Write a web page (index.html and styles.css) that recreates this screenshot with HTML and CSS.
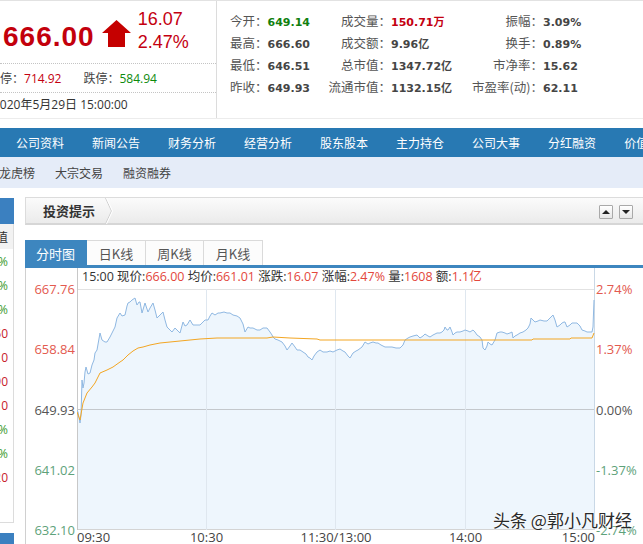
FILE: index.html
```html
<!DOCTYPE html>
<html lang="zh-CN">
<head>
<meta charset="utf-8">
<title>行情</title>
<link rel="stylesheet" href="styles.css">
</head>
<body>
<div class="page">
  <header class="head">
    <div class="quote">
      <div class="price-row">
        <span class="price">666.00</span>
        <svg class="arrow" width="29" height="27" viewBox="0 0 29 27"><polygon points="14.5,0 29,13 23,13 23,27 6,27 6,13 0,13" fill="#c50000"/></svg>
        <div class="change"><div>16.07</div><div>2.47%</div></div>
      </div>
      <div class="limits">
        <span class="lim first">涨停：<span class="up">714.92</span></span>
        <span class="lim">跌停：<span class="down">584.94</span></span>
      </div>
      <div class="date">2020年5月29日 15:00:00</div>
    </div>
    <div class="stats">
      <div class="c1"><span class="lb">今开：</span><span class="v green">649.14</span></div>
      <span class="lb r">成交量：</span><span class="v red">150.71万</span>
      <span class="lb r">振幅：</span><span class="v">3.09%</span>

      <div class="c1"><span class="lb">最高：</span><span class="v">666.60</span></div>
      <span class="lb r">成交额：</span><span class="v">9.96亿</span>
      <span class="lb r">换手：</span><span class="v">0.89%</span>

      <div class="c1"><span class="lb">最低：</span><span class="v">646.51</span></div>
      <span class="lb r">总市值：</span><span class="v">1347.72亿</span>
      <span class="lb r">市净率：</span><span class="v">15.62</span>

      <div class="c1"><span class="lb">昨收：</span><span class="v">649.93</span></div>
      <span class="lb r">流通市值：</span><span class="v">1132.15亿</span>
      <span class="lb r">市盈率(动)：</span><span class="v">62.11</span>
    </div>
  </header>

  <nav class="nav">
    <a>公司资料</a><a>新闻公告</a><a>财务分析</a><a>经营分析</a><a>股东股本</a><a>主力持仓</a><a>公司大事</a><a>分红融资</a><a>价值分析</a>
  </nav>
  <nav class="subnav">
    <a class="first">龙虎榜</a><a>大宗交易</a><a>融资融券</a>
  </nav>

  <div class="main">
    <aside class="side">
      <div class="side-head"></div>
      <div class="side-list">
        <div class="row hd">市值</div>
        <div class="row g">2.47%</div>
        <div class="row g">1.37%</div>
        <div class="row g">0.89%</div>
        <div class="row r">15.60</div>
        <div class="row r">62.10</div>
        <div class="row r">9.90</div>
        <div class="row r">1.10</div>
        <div class="row g">3.09%</div>
        <div class="row g">0.00%</div>
        <div class="row r">8.20</div>
      </div>
      <div class="side-head second"></div>
    </aside>

    <section class="content">
      <div class="tipbar">
        <span class="tip-title">投资提示</span>
        <svg class="chev" width="8" height="26" viewBox="0 0 8 26"><polyline points="0.5,0 6.5,13 0.5,26" fill="none" stroke="#cfcfcf" stroke-width="1"/><polyline points="1.5,0 7.5,13 1.5,26" fill="none" stroke="#ffffff" stroke-width="1"/></svg>
        <div class="tip-btns">
          <span class="tbtn"><span class="tri-up"></span></span>
          <span class="tbtn"><span class="tri-down"></span></span>
        </div>
      </div>

      <div class="tabs">
        <span class="tab active w62">分时图</span>
        <span class="tab w59">日K线</span>
        <span class="tab w58">周K线</span>
        <span class="tab w59">月K线</span>
      </div>

      <div class="chart">
        <div class="info">15:00 现价:<em>666.00</em> 均价:<em>661.01</em> 涨跌:<em>16.07</em> 涨幅:<em>2.47%</em> 量:<em>1608</em> 额:<em>1.1亿</em></div>

        <div class="yl">
          <div class="t red"><span>667.76</span></div>
          <div class="t red"><span>658.84</span></div>
          <div class="t gray"><span>649.93</span></div>
          <div class="t green"><span>641.02</span></div>
          <div class="t green"><span>632.10</span></div>
        </div>

        <svg class="plot" width="518" height="241" viewBox="0 0 518 241">
          <polygon fill="#eef6fd" points="0,121 1,123 3,134 4,126 5,91 6,99 7,94 8,83 9,78 11,85 13,84 15,76 17,71 18,64 20,61 23,44 25,51 28,53 30,53 33,48 35,44 38,38 40,29 43,24 45,27 48,26 50,17 51,14 53,13 55,11 58,9 60,16 62,13 63,13 65,24 68,14 71,23 73,19 76,14 78,21 80,29 83,26 86,23 88,31 90,38 93,41 95,43 98,39 101,42 103,44 106,33 108,37 110,36 113,31 116,36 120,36 123,36 126,33 128,31 131,31 133,27 135,24 138,26 141,24 143,24 147,23 150,24 153,24 156,26 160,27 163,29 166,35 168,43 171,38 173,39 176,39 180,41 183,41 186,39 190,39 193,43 195,46 196,48 198,50 201,51 205,53 208,57 210,61 213,57 215,54 218,58 220,61 223,61 226,63 229,65 231,68 233,69 235,71 237,67 240,63 243,61 246,63 250,63 253,62 256,63 260,61 263,60 266,62 268,63 271,67 273,69 276,64 279,62 281,61 285,58 288,53 291,55 293,54 296,53 299,54 301,54 304,56 308,58 311,58 315,58 319,59 323,59 326,56 328,51 331,49 333,48 336,47 340,46 343,49 346,47 348,45 351,47 353,48 356,46 360,44 363,44 365,43 367,41 368,38 370,41 371,41 373,38 375,43 376,46 378,44 380,43 383,43 386,42 388,41 391,42 393,43 396,41 398,43 400,46 403,48 405,51 406,59 408,61 410,57 411,53 413,55 415,56 418,51 420,44 423,43 425,43 428,44 430,45 433,44 435,43 436,49 438,47 440,46 443,44 446,43 449,41 451,39 453,35 454,29 456,31 458,33 461,32 463,31 467,32 470,32 473,29 476,26 478,31 480,38 483,36 485,34 487,33 488,33 490,38 493,36 495,34 498,34 500,34 503,37 505,41 508,42 510,43 513,43 515,43 516,38 517,11 517,241 0,241"/>
          <line x1="0" y1="0.5" x2="518" y2="0.5" stroke="#e2e2e2"/>
          <line x1="0" y1="240.5" x2="518" y2="240.5" stroke="#d4d4d4"/>
          <line x1="0" y1="120.5" x2="518" y2="120.5" stroke="#c4c8cc"/>
          <line x1="129.5" y1="0" x2="129.5" y2="241" stroke="#dfe7ef"/>
          <line x1="258.5" y1="0" x2="258.5" y2="241" stroke="#dfe7ef"/>
          <line x1="388.5" y1="0" x2="388.5" y2="241" stroke="#dfe7ef"/>
          <line x1="0.5" y1="0" x2="0.5" y2="241" stroke="#c8c8c8"/>
          <line x1="517.5" y1="0" x2="517.5" y2="241" stroke="#c9d8e6"/>
          <polyline fill="none" stroke="#8fb8e2" stroke-width="1" stroke-linejoin="round" points="0,121 1,123 3,134 4,126 5,91 6,99 7,94 8,83 9,78 11,85 13,84 15,76 17,71 18,64 20,61 23,44 25,51 28,53 30,53 33,48 35,44 38,38 40,29 43,24 45,27 48,26 50,17 51,14 53,13 55,11 58,9 60,16 62,13 63,13 65,24 68,14 71,23 73,19 76,14 78,21 80,29 83,26 86,23 88,31 90,38 93,41 95,43 98,39 101,42 103,44 106,33 108,37 110,36 113,31 116,36 120,36 123,36 126,33 128,31 131,31 133,27 135,24 138,26 141,24 143,24 147,23 150,24 153,24 156,26 160,27 163,29 166,35 168,43 171,38 173,39 176,39 180,41 183,41 186,39 190,39 193,43 195,46 196,48 198,50 201,51 205,53 208,57 210,61 213,57 215,54 218,58 220,61 223,61 226,63 229,65 231,68 233,69 235,71 237,67 240,63 243,61 246,63 250,63 253,62 256,63 260,61 263,60 266,62 268,63 271,67 273,69 276,64 279,62 281,61 285,58 288,53 291,55 293,54 296,53 299,54 301,54 304,56 308,58 311,58 315,58 319,59 323,59 326,56 328,51 331,49 333,48 336,47 340,46 343,49 346,47 348,45 351,47 353,48 356,46 360,44 363,44 365,43 367,41 368,38 370,41 371,41 373,38 375,43 376,46 378,44 380,43 383,43 386,42 388,41 391,42 393,43 396,41 398,43 400,46 403,48 405,51 406,59 408,61 410,57 411,53 413,55 415,56 418,51 420,44 423,43 425,43 428,44 430,45 433,44 435,43 436,49 438,47 440,46 443,44 446,43 449,41 451,39 453,35 454,29 456,31 458,33 461,32 463,31 467,32 470,32 473,29 476,26 478,31 480,38 483,36 485,34 487,33 488,33 490,38 493,36 495,34 498,34 500,34 503,37 505,41 508,42 510,43 513,43 515,43 516,38 517,11"/>
          <polyline fill="none" stroke="#f3a623" stroke-width="1" stroke-linejoin="round" points="0,123 3,131 6,114 10,104 15,98 18,94 23,84 30,81 36,78 43,73 46,71 51,66 56,62 61,59 66,58 73,56 83,54 93,53 103,52 113,51 123,50 140,49 190,49 196,48 213,49 240,50 243,51 455,51 456,50 493,50 494,49 515,49 517,44"/>
        </svg>

        <div class="yr">
          <div class="t red"><span>2.74%</span></div>
          <div class="t red"><span>1.37%</span></div>
          <div class="t gray"><span>0.00%</span></div>
          <div class="t green"><span>-1.37%</span></div>
          <div class="t green"><span>-2.74%</span></div>
        </div>

        <div class="xa">
          <div class="t"><span>09:30</span></div>
          <div class="t"><span>10:30</span></div>
          <div class="t"><span>11:30/13:00</span></div>
          <div class="t"><span>14:00</span></div>
          <div class="t"><span>15:00</span></div>
        </div>
      </div>
    </section>
  </div>

  <div class="wm">头条 @郭小凡财经</div>
</div>
</body>
</html>
```

FILE: styles.css
```css
* { box-sizing: border-box; }
html, body { margin: 0; padding: 0; }
body {
  width: 643px;
  height: 544px;
  overflow: hidden;
  background: #fff;
  font-family: "Noto Sans CJK SC", sans-serif;
  color: #333;
}
.page { position: relative; width: 643px; height: 544px; overflow: hidden; }

/* ---------- header ---------- */
.head {
  display: flex;
  height: 119px;
  border-top: 1px solid #e2e2e2;
  border-bottom: 1px solid #ececec;
}
.quote {
  width: 217px;
  flex: none;
  border-right: 1px solid #dcdcdc;
}
.price-row {
  display: flex;
  align-items: flex-start;
  height: 63px;
  border-bottom: 1px dotted #c4c4c4;
}
.price {
  margin: 22px 0 0 3px;
  font: bold 28px/28px "Liberation Sans", sans-serif;
  letter-spacing: 1px;
  color: #c3000c;
}
.arrow { margin: 19px 0 0 7px; flex: none; }
.change {
  margin: 7px 0 0 7px;
  font: 18px/23px "Liberation Sans", sans-serif;
  color: #c40010;
}
.limits {
  display: flex;
  align-items: center;
  gap: 22px;
  height: 29px;
  border-bottom: 1px dotted #c4c4c4;
  font-family: "Open Sans", "Noto Sans CJK SC", sans-serif;
  font-size: 12px;
  color: #444;
  white-space: nowrap;
}
.lim.first { margin-left: -12px; }
.up { color: #c40010; }
.down { color: #0c8a0c; }
.date {
  height: 25px;
  line-height: 24px;
  margin-left: -7px;
  font-family: "Open Sans", "Noto Sans CJK SC", sans-serif;
  font-size: 12px;
  color: #333;
  white-space: nowrap;
}

.stats {
  flex: 1;
  display: grid;
  grid-template-columns: 100px 61px 76px 76px 1fr;
  grid-auto-rows: 22px;
  align-items: baseline;
  padding: 9px 0 0 13px;
  line-height: 22px;
}
.stats .c1 { display: flex; align-items: baseline; }
.stats .lb { font-size: 12.5px; color: #555; white-space: nowrap; }
.stats .lb.r { justify-self: end; }
.stats .v {
  font: bold 11px/22px "DejaVu Sans", "Noto Sans CJK SC", sans-serif;
  color: #454545;
  white-space: nowrap;
}
.stats .v.green { color: #12800f; }
.stats .v.red { color: #c40010; }

/* ---------- navs ---------- */
.nav {
  display: flex;
  height: 29px;
  margin-top: 9px;
  padding-left: 2px;
  background: #2879b3;
  white-space: nowrap;
  overflow: hidden;
}
.nav a {
  flex: none;
  padding: 0 14px;
  font-size: 12px;
  line-height: 29px;
  color: #fff;
}
.subnav {
  display: flex;
  align-items: center;
  height: 31px;
  background: #e5ecf8;
}
.subnav a {
  flex: none;
  padding: 0 10px;
  font-size: 12px;
  line-height: 31px;
  color: #444;
}
.subnav a.first { margin-left: -11px; }

/* ---------- main ---------- */
.main { display: flex; margin-top: 9px; }
.side { width: 14px; flex: none; margin-right: 11px; padding-top: 1px; }
.side-head { height: 26px; background: #3b80c0; }
.side-head.second { margin-top: 10px; height: 12px; }
.side-list {
  height: 299px;
  border-right: 1px solid #dcdcdc;
  border-bottom: 1px solid #dcdcdc;
}
.side-list .row {
  display: flex;
  justify-content: flex-end;
  align-items: center;
  height: 24px;
  padding-right: 5px;
  font-family: "Open Sans", "Noto Sans CJK SC", sans-serif;
  font-size: 12px;
  white-space: nowrap;
}
.side-list .row.hd { height: 25px; background: #f2f2f2; color: #333; }
.side-list .row.g { color: #3c9a2e; }
.side-list .row.r { color: #c8202a; }

.content { flex: 1; min-width: 0; }

.tipbar {
  display: flex;
  align-items: center;
  height: 28px;
  border: 1px solid #dcdcdc;
  border-bottom: 2px solid #d6d6d6;
  border-right: none;
  background: linear-gradient(#fbfbfb, #ebebeb);
}
.tip-title {
  padding-left: 17px;
  font-size: 13px;
  font-weight: bold;
  color: #333;
  line-height: 25px;
}
.chev { margin-left: 10px; flex: none; }
.tip-btns { display: flex; gap: 6px; margin-left: auto; margin-right: 10px; margin-top: 2px; }
.tbtn {
  display: flex;
  align-items: center;
  justify-content: center;
  width: 14px;
  height: 14px;
  border: 1px solid #a9a9a9;
  border-radius: 1px;
  background: linear-gradient(#ffffff, #e6e6e6);
}
.tri-up, .tri-down { width: 0; height: 0; border-left: 4px solid transparent; border-right: 4px solid transparent; }
.tri-up { border-bottom: 4px solid #222; }
.tri-down { border-top: 4px solid #222; }

.tabs {
  display: flex;
  margin-top: 15px;
  height: 28px;
  border-bottom: 3px solid #3d86bf;
}
.tab {
  display: flex;
  align-items: center;
  justify-content: center;
  height: 25px;
  border: 1px solid #dadada;
  border-left: none;
  border-bottom: none;
  background: #fcfcfc;
  font-size: 13px;
  color: #555;
}
.tab.active { background: #3d86bf; border-color: #3d86bf; color: #fff; }
.w62 { width: 62px; }
.w59 { width: 59px; }
.w58 { width: 58px; }

/* ---------- chart ---------- */
.chart {
  display: grid;
  grid-template-columns: 51px 518px 1fr;
  grid-template-rows: 21px 241px 15px;
  border-left: 1px solid #d0d0d0;
  font-family: "Open Sans", "Noto Sans CJK SC", sans-serif;
}
.info {
  grid-column: 2;
  grid-row: 1;
  border-left: 1px solid #c8c8c8;
  border-right: 1px solid #c9d8e6;
  padding-left: 4px;
  font-size: 12.5px;
  line-height: 18px;
  color: #333;
  white-space: nowrap;
}
.info em { font-style: normal; color: #e3473c; }
.plot { grid-column: 2; grid-row: 2; display: block; }

.yl, .yr {
  grid-row: 2;
  display: flex;
  flex-direction: column;
  justify-content: space-between;
}
.yl { grid-column: 1; padding-right: 2px; }
.yr { grid-column: 3; padding-left: 1px; }
.yl .t, .yr .t {
  flex: 0 0 0;
  min-height: 0;
  height: 0;
  display: flex;
  align-items: center;
  font-size: 13px;
  line-height: 16px;
  white-space: nowrap;
}
.yl .t { justify-content: flex-end; }
.yr .t { justify-content: flex-start; }
.t.red { color: #e35a4f; }
.t.gray { color: #555; }
.t.green { color: #5ea27a; }

.xa {
  grid-column: 2;
  grid-row: 3;
  display: flex;
  justify-content: space-between;
}
.xa .t {
  flex: 0 0 0;
  min-width: 0;
  width: 0;
  display: flex;
  justify-content: center;
  font-size: 13px;
  line-height: 15px;
  color: #444;
  white-space: nowrap;
}
.xa .t:first-child { justify-content: flex-start; }
.xa .t:last-child { justify-content: flex-end; }

/* watermark over the chart */
.wm {
  position: absolute;
  left: 493px;
  top: 510px;
  font-size: 17px;
  line-height: 20px;
  color: #2a2a2a;
  white-space: nowrap;
  text-shadow: 0 0 2px #fff, 0 0 2px #fff;
}
```
